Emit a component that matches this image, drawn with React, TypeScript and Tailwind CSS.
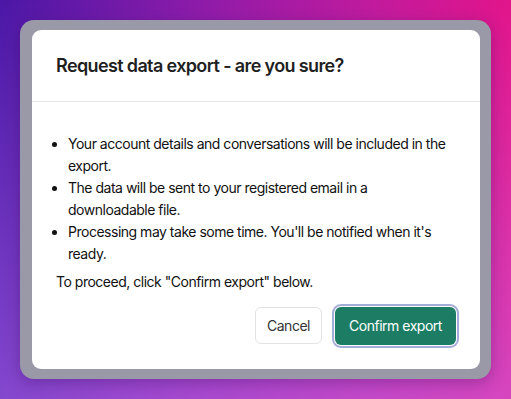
export default function App() {
    return (
        <div className="min-h-[399px] w-[511px] pt-5 pl-5 font-['Inter','Liberation_Sans',sans-serif] bg-[linear-gradient(to_bottom,rgba(200,130,255,0)_0%,rgba(200,130,255,0.45)_100%),linear-gradient(to_right,#4b17a6_0%,#8f1ba9_40%,#c41a9c_75%,#e2148a_100%)]">
            {/* Frame around the dialog */}
            <div className="w-[471px] rounded-[14px] bg-[#9a99a7] pt-[10px] pb-[10px] pl-3 pr-[11px] shadow-[0_4px_16px_rgba(40,0,80,0.3)]">
                <div className="w-[448px] rounded-[9px] bg-white">
                    {/* Header */}
                    <div className="border-b border-[#e5e5e5] px-6 pt-[22px] pb-[21px]">
                        <h2 className="text-[18px] leading-7 font-semibold tracking-[-0.035em] text-[#1f1f1f]">
                            Request data export - are you sure?
                        </h2>
                    </div>

                    {/* Body */}
                    <div className="px-6 pt-[31px] pb-6 text-[14px] leading-[22px] tracking-[-0.035em] text-[#111]">
                        <ul className="list-disc pl-3">
                            <li>
                                Your account details and conversations will be
                                included in the export.
                            </li>
                            <li>
                                The data will be sent to your registered email
                                in a downloadable file.
                            </li>
                            <li>
                                Processing may take some time. You'll be
                                notified when it's ready.
                            </li>
                        </ul>
                        <p className="mt-[6px]">
                            To proceed, click "Confirm export" below.
                        </p>

                        <div className="mt-[14px] flex justify-end gap-[13px]">
                            <button className="h-[37px] w-[67px] rounded-md border border-[#e3e3e3] bg-white text-[14px] text-[#333]">
                                Cancel
                            </button>
                            <button className="h-[38px] w-[121px] rounded-md bg-[#1d7d64] text-[14px] text-white ring-2 ring-[#a5acd8] ring-offset-1">
                                Confirm export
                            </button>
                        </div>
                    </div>
                </div>
            </div>
        </div>
    );
}
